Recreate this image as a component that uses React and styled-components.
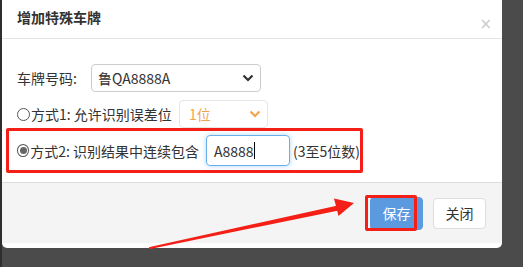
import React from "react";
import styled, { createGlobalStyle } from "styled-components";

const Global = createGlobalStyle`
  html, body { margin: 0; padding: 0; }
  body {
    width: 523px; height: 267px; overflow: hidden;
    background: #4b4b4b;
    font-family: "Noto Sans CJK SC", "Noto Sans", sans-serif;
    font-size: 14px; color: #333;
  }
`;

const Page = styled.div`
  position: relative;
  width: 523px;
  height: 267px;
  border-left: 2px solid #2e2e2e;
  box-sizing: border-box;
`;

const Dialog = styled.div`
  width: 500px;
  height: 248px;
  background: #fff;
  border-radius: 0 0 5px 5px;
  display: flex;
  flex-direction: column;
  overflow: hidden;
`;

const Header = styled.div`
  height: 38px;
  border-bottom: 1px solid #e5e5e5;
  display: flex;
  justify-content: space-between;
  padding: 0 10px 0 15px;
`;

const Title = styled.div`
  font-weight: bold;
  font-size: 14px;
  color: #333;
  line-height: 14px;
  margin-top: 10px;
`;

const Close = styled.div`
  color: #c8c8c8;
  font-family: "DejaVu Sans", sans-serif;
  font-size: 15px;
  line-height: 15px;
  margin-top: 17px;
`;

const Body = styled.div`
  flex: 1;
  padding: 25px 0 0 4px;
  display: flex;
  flex-direction: column;
`;

const Row = styled.div`
  display: flex;
  align-items: center;
  height: 28px;
  padding-left: 11px;
  margin-top: ${(p) => p.$mt || 0}px;
`;

const Label = styled.span`
  width: 74px;
  white-space: nowrap;
`;

const Select = styled.div`
  box-sizing: border-box;
  width: ${(p) => p.$w}px;
  height: 28px;
  border: 1px solid ${(p) => p.$border || "#ccc"};
  border-radius: 4px;
  display: flex;
  align-items: center;
  justify-content: space-between;
  padding: 0 6px 0 6px;
  color: ${(p) => p.$color || "#333"};
  font-size: 14px;
`;

const Radio = styled.span`
  box-sizing: border-box;
  width: 13px;
  height: 13px;
  border-radius: 50%;
  border: 1px solid #555;
  margin-right: 1px;
  display: inline-flex;
  align-items: center;
  justify-content: center;
  &::after {
    content: "";
    width: 7px;
    height: 7px;
    border-radius: 50%;
    background: ${(p) => (p.$checked ? "#666" : "transparent")};
  }
`;

const Text = styled.span`
  white-space: nowrap;
  margin-right: ${(p) => p.$mr || 0}px;
`;

const Highlight = styled.div`
  box-sizing: border-box;
  width: 357px;
  height: 45px;
  border: 3px solid #f41f16;
  border-radius: 2px;
  display: flex;
  align-items: center;
  padding-left: 8px;
`;

const Input = styled.div`
  box-sizing: border-box;
  width: 90px;
  height: 31px;
  border: 1px solid #66afe9;
  border-radius: 4px;
  box-shadow: 0 0 5px rgba(102, 175, 233, 0.5);
  display: flex;
  align-items: center;
  padding-left: 7px;
  margin: 0 3px 0 7px;
  font-size: 14px;
  color: #333;
`;

const Caret = styled.span`
  display: inline-block;
  width: 1px;
  height: 17px;
  background: #000;
`;

const Footer = styled.div`
  height: 60px;
  background: #f4f4f4;
  border-top: 1px solid #dcdcdc;
  margin-bottom: 5px;
  display: flex;
  justify-content: flex-end;
  align-items: center;
  gap: 10px;
  padding-right: 16px;
`;

const Button = styled.div`
  position: relative;
  box-sizing: border-box;
  width: 53px;
  height: ${(p) => (p.$primary ? 33 : 31)}px;
  border-radius: 4px;
  display: flex;
  align-items: center;
  justify-content: center;
  font-size: 14px;
  background: ${(p) => (p.$primary ? "#5b9ade" : "#fff")};
  color: ${(p) => (p.$primary ? "#fff" : "#333")};
  border: 1px solid ${(p) => (p.$primary ? "#5b9ade" : "#dedede")};
`;

const Mark = styled.div`
  position: absolute;
  left: -6px;
  top: -3px;
  width: 52px;
  height: 36px;
  box-sizing: border-box;
  border: 3px solid #f41f16;
  border-radius: 2px;
`;

const Arrow = styled.svg`
  position: absolute;
  left: -2px;
  top: 0;
  pointer-events: none;
`;

const Chevron = ({ color }) => (
  <svg width="12" height="8" viewBox="0 0 12 8">
    <path d="M1.5 1.5 L6 6 L10.5 1.5" fill="none" stroke={color} strokeWidth="2.2" />
  </svg>
);

export default function App() {
  return (
    <Page>
      <Global />
      <Dialog>
        <Header>
          <Title>增加特殊车牌</Title>
          <Close>×</Close>
        </Header>
        <Body>
          <Row>
            <Label>车牌号码:</Label>
            <Select $w={170}>
              <span>鲁QA8888A</span>
              <Chevron color="#333" />
            </Select>
          </Row>
          <Row $mt={8}>
            <Radio />
            <Text $mr={7}>方式1: 允许识别误差位</Text>
            <Select $w={89} $border="#e6e6e6" $color="#f5a34a">
              <span>&nbsp;1位</span>
              <Chevron color="#f5a34a" />
            </Select>
          </Row>
          <Highlight>
            <Radio $checked />
            <Text>方式2: 识别结果中连续包含</Text>
            <Input>
              A8888<Caret />
            </Input>
            <Text>(3至5位数)</Text>
          </Highlight>
        </Body>
        <Footer>
          <Button $primary>
            保存
            <Mark />
          </Button>
          <Button>关闭</Button>
        </Footer>
      </Dialog>
      <Arrow width="523" height="267" viewBox="0 0 523 267">
        <path d="M150 248 L338 206.5 L338.5 209.5 Z" fill="#f41f16" stroke="#f41f16" strokeWidth="2" strokeLinejoin="round" />
        <polygon points="354,203 334,198.5 338.5,216" fill="#f41f16" />
      </Arrow>
    </Page>
  );
}
